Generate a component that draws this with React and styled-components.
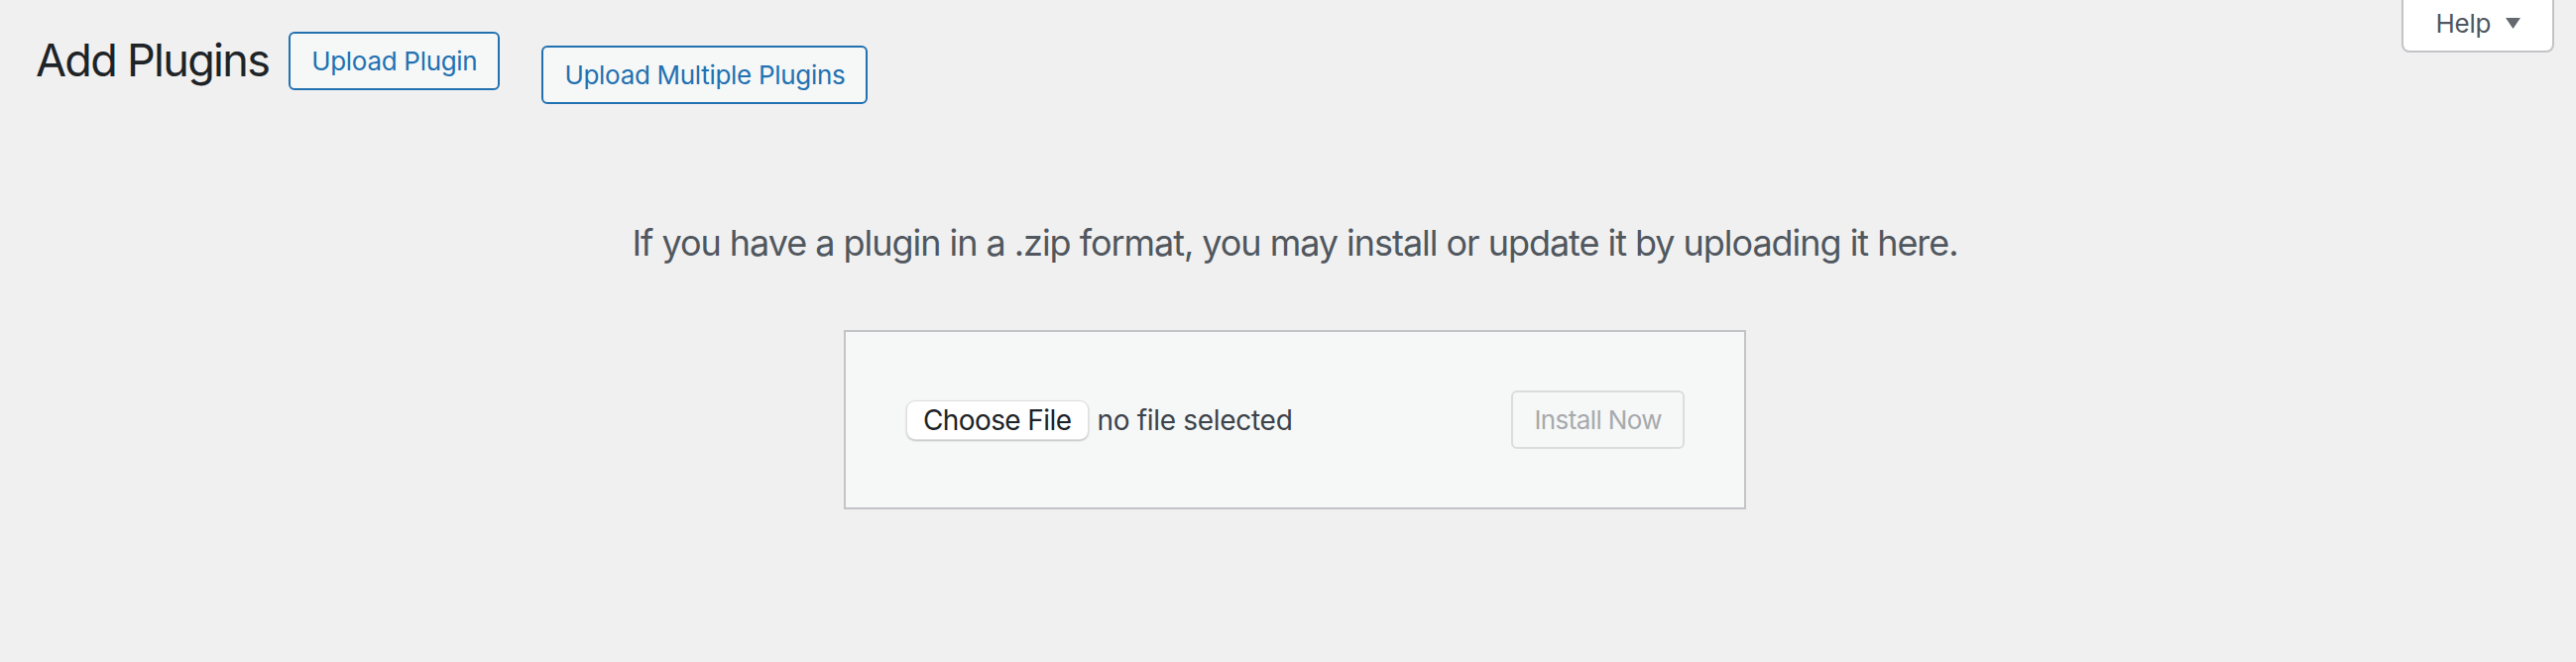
import React from 'react';
import styled, { createGlobalStyle } from 'styled-components';

const GlobalStyle = createGlobalStyle`
  html, body {
    margin: 0;
    padding: 0;
    background: #f0f0f1;
  }
  body {
    font-family: Inter, "Liberation Sans", sans-serif;
    color: #3c434a;
  }
`;

const Wrap = styled.div`
  min-height: 668px;
  padding: 0 22px 0 36px;
`;

const HelpTab = styled.button`
  float: right;
  height: 53px;
  box-sizing: border-box;
  display: flex;
  align-items: center;
  gap: 15px;
  padding: 0 32px 4px 33px;
  border: 2px solid #c3c4c7;
  border-top: none;
  border-radius: 0 0 8px 8px;
  background: #fff;
  color: #50575e;
  font-family: inherit;
  font-size: 26px;
  line-height: 31px;
  letter-spacing: -0.3px;
  cursor: pointer;
`;

const Header = styled.div`
  display: flex;
  align-items: flex-start;
  padding-top: 32px;
`;

const Title = styled.h1`
  margin: 1px 0 0;
  font-size: 45px;
  font-weight: 400;
  line-height: 56px;
  color: #1d2327;
  letter-spacing: -1.7px;
`;

const TitleAction = styled.a`
  display: inline-flex;
  align-items: center;
  box-sizing: border-box;
  height: 59px;
  margin-left: ${(p) => p.$gap}px;
  margin-top: ${(p) => p.$offset}px;
  padding: 0 21px;
  border: 2px solid #2271b1;
  border-radius: 6px;
  background: #f6f7f7;
  color: #2271b1;
  font-size: 26px;
  letter-spacing: -0.3px;
  text-decoration: none;
  white-space: nowrap;
`;

const InstallHelp = styled.p`
  margin: 118px 0 0;
  text-align: center;
  font-size: 36px;
  line-height: 44px;
  letter-spacing: -1.04px;
  color: #50575e;
`;

const UploadForm = styled.form`
  box-sizing: border-box;
  width: 910px;
  height: 181px;
  margin: 66px auto 0;
  padding: 0 60px 0 61px;
  display: flex;
  align-items: center;
  justify-content: space-between;
  border: 2px solid #c3c4c7;
  background: #f6f7f7;
`;

const FilePicker = styled.div`
  display: flex;
  align-items: center;
  gap: 8px;
`;

const ChooseButton = styled.button`
  box-sizing: border-box;
  height: 40px;
  padding: 0 17px 0 16px;
  border: 1px solid #dedede;
  border-radius: 9px;
  background: #fff;
  box-shadow: 0 1px 2px rgba(0, 0, 0, 0.22);
  color: #1d2327;
  font-family: inherit;
  font-size: 28px;
  line-height: 38px;
  letter-spacing: -0.6px;
`;

const FileStatus = styled.span`
  font-size: 28px;
  letter-spacing: -0.3px;
  color: #3c434a;
`;

const InstallButton = styled.button`
  box-sizing: border-box;
  height: 59px;
  padding: 0 21px;
  border: 2px solid #dcdcde;
  border-radius: 6px;
  background: #f6f7f7;
  color: #a7aaad;
  font-family: inherit;
  font-size: 26px;
  letter-spacing: -0.6px;
`;

const Caret = () => (
  <svg width="15" height="11" viewBox="0 0 15 11" aria-hidden="true">
    <polygon points="0,0 15,0 7.5,11" fill="#646970" />
  </svg>
);

export default function App() {
  return (
    <>
      <GlobalStyle />
      <Wrap>
        <HelpTab type="button">
          Help <Caret />
        </HelpTab>

        <Header>
          <Title>Add Plugins</Title>
          <TitleAction href="#upload" $gap={20} $offset={0}>
            Upload Plugin
          </TitleAction>
          <TitleAction href="#upload-multiple" $gap={42} $offset={14}>
            Upload Multiple Plugins
          </TitleAction>
        </Header>

        <InstallHelp>
          If you have a plugin in a .zip format, you may install or update it by uploading it here.
        </InstallHelp>

        <UploadForm onSubmit={(e) => e.preventDefault()}>
          <FilePicker>
            <ChooseButton type="button">Choose File</ChooseButton>
            <FileStatus>no file selected</FileStatus>
          </FilePicker>
          <InstallButton type="submit" disabled>
            Install Now
          </InstallButton>
        </UploadForm>
      </Wrap>
    </>
  );
}
